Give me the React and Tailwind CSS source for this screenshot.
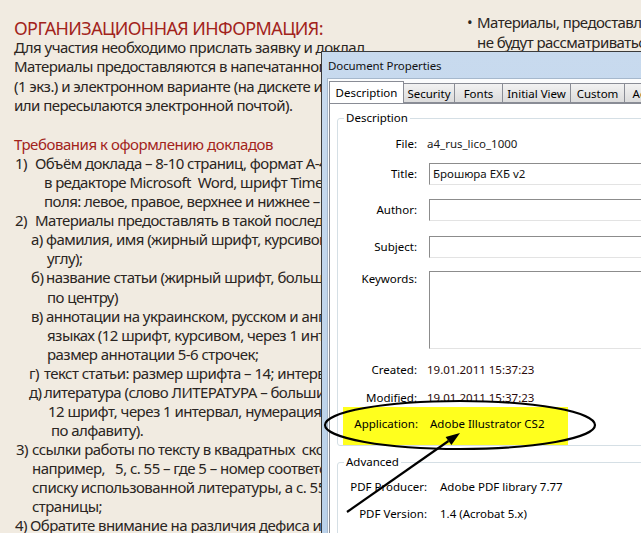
// App.jsx

import React from 'react';

const intro = [
    'Для участия необходимо прислать заявку и доклад.',
    'Материалы предоставляются в напечатанном виде',
    '(1 экз.) и электронном варианте (на дискете или CD)',
    'или пересылаются электронной почтой).',
];

const rules = [
    { pad: 'pl-[15px]', num: '1)', numW: 'w-[20px]', text: 'Объём доклада – 8-10 страниц, формат А-4, набранные' },
    { pad: 'pl-[44px]', text: 'в редакторе Microsoft  Word, шрифт Times New Roman,' },
    { pad: 'pl-[44px]', text: 'поля: левое, правое, верхнее и нижнее – 2 см;' },
    { pad: 'pl-[15px]', num: '2)', numW: 'w-[20px]', text: 'Материалы предоставлять в такой последовательности:' },
    { pad: 'pl-[31px]', num: 'а)', numW: 'w-[15px]', text: 'фамилия, имя (жирный шрифт, курсивом, в правом верхнем' },
    { pad: 'pl-[47px]', text: 'углу);' },
    { pad: 'pl-[31px]', num: 'б)', numW: 'w-[15px]', text: 'название статьи (жирный шрифт, большими буквами,' },
    { pad: 'pl-[47px]', text: 'по центру)' },
    { pad: 'pl-[31px]', num: 'в)', numW: 'w-[15px]', text: 'аннотации на украинском, русском и английском' },
    { pad: 'pl-[47px]', text: 'языках (12 шрифт, курсивом, через 1 интервал),' },
    { pad: 'pl-[47px]', text: 'размер аннотации 5-6 строчек;' },
    { pad: 'pl-[29px]', num: 'г)', numW: 'w-[15px]', text: 'текст статьи: размер шрифта – 14; интервал – 1,5;' },
    { pad: 'pl-[29px]', num: 'д)', numW: 'w-[15px]', text: 'литература (слово ЛИТЕРАТУРА – большими буквами,' },
    { pad: 'pl-[48px]', text: '12 шрифт, через 1 интервал, нумерация' },
    { pad: 'pl-[51px]', text: 'по алфавиту).' },
    { pad: 'pl-[16px]', num: '3)', numW: 'w-[16px]', text: 'ссылки работы по тексту в квадратных  скобках,' },
    { pad: 'pl-[32px]', text: 'например,   5, с. 55 – где 5 – номер соответствующей' },
    { pad: 'pl-[32px]', text: 'списку использованной литературы, а с. 55 – номер' },
    { pad: 'pl-[32px]', text: 'страницы;' },
    { pad: 'pl-[15px]', num: '4)', numW: 'w-[15px]', text: 'Обратите внимание на различия дефиса и тире' },
];

const tabs = [
    { label: 'Security', w: 'w-[52px]' },
    { label: 'Fonts', w: 'w-[49px]' },
    { label: 'Initial View', w: 'w-[69px]' },
    { label: 'Custom', w: 'w-[55px]' },
    { label: 'Advanced', w: 'w-[70px]' },
];

const TextBox = ({ value, tall }) => (
    <div
        className={`ml-[2px] w-[260px] border border-[#8c8c8c] border-r-[#e3e3e3] border-b-[#e3e3e3] bg-white pl-[3px] text-[#111] ${
            tall ? 'h-[78px]' : 'h-[22px] leading-[20px]'
        }`}
    >
        {value}
    </div>
);

const Row = ({ label, children, className = '', labelW = 'w-[79px]', gap = 'gap-[10px]', top }) => (
    <div className={`flex ${top ? 'items-start' : 'items-center'} ${gap} ${className}`}>
        <div className={`${labelW} shrink-0 text-right`}>{label}</div>
        {children}
    </div>
);

const DocumentProperties = () => (
    <div className="absolute left-[321px] top-[51px] flex h-[500px] w-[340px] flex-col border border-[#3b3b3b] bg-linear-to-b from-[#c8daee] to-[#b9d1ea] font-['Noto_Sans',sans-serif] text-[11.5px] text-black">
        <div className="flex h-[26px] items-center pl-[6px] pt-[1px] text-[11.5px] tracking-[-0.1px] text-[#111]">Document Properties</div>

        <div className="ml-[5px] flex flex-1 flex-col border-l border-t border-[#a6b8cc] bg-[#fbfcfd] pl-[1px] pt-[2px]">
            {/* tabs */}
            <div className="flex h-[22px] items-end overflow-hidden">
                <div className="relative z-10 -mb-px flex h-[23px] w-[75px] shrink-0 items-center justify-center border border-b-0 border-[#898c95] bg-white">
                    Description
                </div>
                {tabs.map((tab) => (
                    <div
                        key={tab.label}
                        className={`${tab.w} -ml-px flex h-[20px] shrink-0 items-center justify-center border border-[#898c95] bg-linear-to-b from-[#f2f2f2] to-[#dcdcdc] pt-[1px]`}
                    >
                        {tab.label}
                    </div>
                ))}
            </div>

            {/* page */}
            <div className="flex-1 border-l border-t border-[#898c95] bg-white pl-[7px] pt-[7px]">
                <fieldset className="w-[400px] rounded-[3px] border border-[#d5dfe5]">
                    <legend className="ml-[6px] px-[2px] leading-[14px]">Description</legend>
                    <Row label="File:" className="mt-[8px] h-[22px]">
                        <span className="text-[#1a1a1a]">a4_rus_lico_1000</span>
                    </Row>
                    <Row label="Title:" className="mt-[8px]">
                        <TextBox value="Брошюра ЕХБ v2" />
                    </Row>
                    <Row label="Author:" className="mt-[14px]">
                        <TextBox />
                    </Row>
                    <Row label="Subject:" className="mt-[15px]">
                        <TextBox />
                    </Row>
                    <Row label="Keywords:" className="mt-[13px] leading-[15px]" top>
                        <TextBox tall />
                    </Row>
                    <Row label="Created:" className="mt-[10px] h-[22px]">
                        <span className="text-[#2a0a0a]">19.01.2011 15:37:23</span>
                    </Row>
                    <Row label="Modified:" className="mt-[6px] h-[22px]">
                        <span className="text-[#2a0a0a]">19.01.2011 15:37:23</span>
                    </Row>
                    <div className="ml-[5px] mt-[-2px] flex h-[38px] w-[225px] items-start gap-[12px] bg-[#ffff1e] pt-[9px] leading-[16px]">
                        <div className="w-[75px] shrink-0 text-right">Application:</div>
                        <span>Adobe Illustrator CS2</span>
                    </div>
                </fieldset>

                <fieldset className="mt-[9px] w-[400px] rounded-[3px] border border-[#d5dfe5] pb-[20px]">
                    <legend className="ml-[6px] px-[2px] leading-[14px]">Advanced</legend>
                    <Row label="PDF Producer:" labelW="w-[89px]" gap="gap-[13px]" className="mt-[7px] h-[22px]">
                        <span>Adobe PDF library 7.77</span>
                    </Row>
                    <Row label="PDF Version:" labelW="w-[89px]" gap="gap-[13px]" className="mt-[5px] h-[22px]">
                        <span>1.4 (Acrobat 5.x)</span>
                    </Row>
                </fieldset>
            </div>
        </div>
    </div>
);

const App = () => {
    return (
        <div className="relative flex h-[533px] w-[641px] overflow-hidden bg-[#f1ebe1] font-['Noto_Sans',sans-serif] text-[#2a2522]">
            {/* brochure text, left column */}
            <div className="w-[452px] shrink-0 whitespace-pre pt-[18px] text-[15px] tracking-[-0.55px]">
                <div className="pl-[14px] text-[18px] leading-[20px] tracking-[-0.6px] text-[#a2231b]">ОРГАНИЗАЦИОННАЯ ИНФОРМАЦИЯ:</div>
                <div className="pl-[14px] leading-[19.3px]">
                    {intro.map((line) => (
                        <div key={line}>{line}</div>
                    ))}
                </div>
                <div className="mt-[20px] pl-[14px] text-[15px] leading-[19px] tracking-[-0.45px] text-[#a2231b]">Требования к оформлению докладов</div>
                <div className="leading-[19.05px]">
                    {rules.map((r, i) => (
                        <div key={i} className={`flex ${r.pad}`}>
                            {r.num && <span className={`${r.numW} shrink-0`}>{r.num}</span>}
                            <span>{r.text}</span>
                        </div>
                    ))}
                </div>
            </div>

            {/* brochure text, right column */}
            <div className="flex whitespace-pre pt-[12px] text-[15px] leading-[20px] tracking-[-0.55px]">
                <span className="w-[25px] pl-[15px] shrink-0">•</span>
                <div>
                    <div>Материалы, предоставленные позже срока,</div>
                    <div>не будут рассматриваться.</div>
                </div>
            </div>

            <DocumentProperties />

            {/* hand-drawn annotation */}
            <svg className="pointer-events-none absolute left-0 top-0" width="641" height="533" viewBox="0 0 641 533">
                <ellipse cx="460" cy="425" rx="135" ry="24" fill="none" stroke="#000" strokeWidth="2.2" />
                <line x1="347" y1="512" x2="448.5" y2="441" stroke="#000" strokeWidth="2.2" />
                <polygon points="460,433 451.4,445.1 445.6,436.9" fill="#000" />
            </svg>
        </div>
    );
};

export default App;
